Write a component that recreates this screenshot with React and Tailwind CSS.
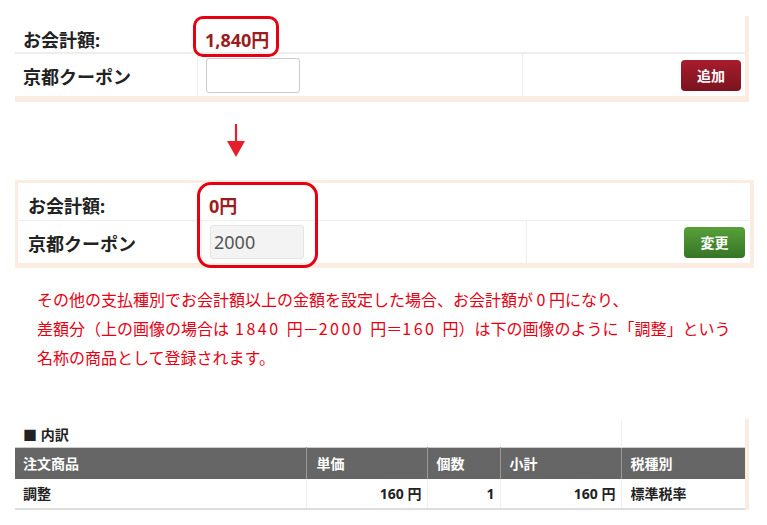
import React from 'react';

const jp = { fontFamily: '"Noto Sans", "Noto Sans CJK JP", sans-serif' };
const cjk = { fontFamily: '"Noto Sans CJK JP", sans-serif' };

function DownArrow() {
    return (
        <svg width="20" height="34" viewBox="0 0 20 34">
            <line x1="10" y1="0" x2="10" y2="24" stroke="#e4202a" strokeWidth="2.2" />
            <polygon points="1,17 19,17 10,33" fill="#e4202a" />
        </svg>
    );
}

export default function App() {
    return (
        <div className="w-[767px] h-[525px] bg-white overflow-hidden text-[#222]" style={jp}>
            {/* Before: coupon panel */}
            <div className="relative ml-[15px] mt-[16px] w-[734px] bg-white border-r-4 border-b-[6px] border-[#fbece2]">
                <div className="grid grid-cols-[182px_325px_1fr] h-[38px] border-b-2 border-[#eeeeee]">
                    <div className="pl-2 pt-[11px] text-[18px] font-bold leading-[26px]">お会計額:</div>
                    <div className="pl-2 pt-[11px] text-[18px] font-bold leading-[26px] text-[#9b1c20]">1,840円</div>
                    <div />
                </div>
                <div className="grid grid-cols-[182px_325px_1fr] h-[42px]">
                    <div className="pl-2 pt-[5px] flex items-center text-[18px] font-bold">京都クーポン</div>
                    <div className="border-l border-[#eeeeee] flex items-center pl-2">
                        <div className="w-[94px] h-[35px] border border-[#cccccc] rounded-[3px] bg-white" />
                    </div>
                    <div className="border-l border-[#eeeeee] flex items-center justify-end pr-[4px]">
                        <button className="w-[60px] h-[31px] rounded-[4px] bg-gradient-to-b from-[#a81d2d] to-[#7a1320] text-white text-[14px] font-bold">追加</button>
                    </div>
                </div>
                <div className="absolute left-[178px] top-0 w-[86px] h-[41px] border-[3px] border-[#e50012] rounded-[10px]" />
            </div>

            {/* Arrow */}
            <div className="h-[78px] pl-[226px] pt-[22px]">
                <DownArrow />
            </div>

            {/* After: coupon panel */}
            <div className="relative ml-[15px] w-[739px] bg-white border-t-[3px] border-l-[3px] border-r-4 border-b-[5px] border-[#fbece2]">
                <div className="grid grid-cols-[183px_325px_1fr] h-[38px] border-b border-[#eeeeee]">
                    <div className="pl-[10px] pt-[10px] text-[18px] font-bold leading-[26px]">お会計額:</div>
                    <div className="pl-2 pt-[10px] text-[18px] font-bold leading-[26px] text-[#9b1c20]">0円</div>
                    <div />
                </div>
                <div className="grid grid-cols-[183px_325px_1fr] h-[42px]">
                    <div className="pl-[10px] pt-[5px] flex items-center text-[18px] font-bold">京都クーポン</div>
                    <div className="border-l border-[#eeeeee] flex items-center pl-2">
                        <div className="w-[94px] h-[34px] border border-[#e4e4e4] rounded-[3px] bg-[#f3f3f3] flex items-center pl-[3px] text-[18px] text-[#555]">2000</div>
                    </div>
                    <div className="border-l border-[#eeeeee] flex items-center justify-end pr-[5px]">
                        <button className="w-[61px] h-[31px] rounded-[4px] bg-gradient-to-b from-[#58a03a] to-[#377527] text-white text-[14px] font-bold">変更</button>
                    </div>
                </div>
                <div className="absolute left-[179px] top-[-1px] w-[121px] h-[86px] border-[3px] border-[#e50012] rounded-[14px]" />
            </div>

            {/* Note */}
            <p className="mt-[17px] pl-[37px] text-[16px] leading-[29px] text-[#e60012] whitespace-nowrap" style={cjk}>
                その他の支払種別でお会計額以上の金額を設定した場合、お会計額が 0 円になり、<br />
                差額分（上の画像の場合は<span className="tracking-[2.5px]"> 1840 </span>円－<span className="tracking-[2.5px]">2000 </span>円＝<span className="tracking-[2.5px]">160 </span>円）は下の画像のように「調整」という<br />
                名称の商品として登録されます。
            </p>

            {/* Breakdown table */}
            <div className="ml-[15px] mt-[47px] w-[734px] border-r-4 border-[#fbece2]">
                <table className="w-full border-collapse text-[14px] font-bold">
                    <colgroup>
                        <col className="w-[291px]" />
                        <col className="w-[121px]" />
                        <col className="w-[73px]" />
                        <col className="w-[121px]" />
                        <col />
                    </colgroup>
                    <tbody>
                        <tr className="h-[28px]">
                            <td colSpan={4} className="pl-2 pt-[3px] text-[14px] align-middle">■ 内訳</td>
                            <td className="border-l border-[#eeeeee]" />
                        </tr>
                        <tr className="h-[32px] bg-[#666666] text-white border-t border-[#cccccc]">
                            <td className="pl-2">注文商品</td>
                            <td className="pl-[10px] border-l border-[#999999]">単価</td>
                            <td className="pl-[9px] border-l border-[#999999]">個数</td>
                            <td className="pl-[9px] border-l border-[#999999]">小計</td>
                            <td className="pl-[9px] border-l border-[#999999]">税種別</td>
                        </tr>
                        <tr className="h-[30px] border-b-2 border-[#dddddd]">
                            <td className="pl-2">調整</td>
                            <td className="pr-[5px] text-right border-l border-[#eeeeee]">160 円</td>
                            <td className="pr-[5px] text-right border-l border-[#eeeeee]">1</td>
                            <td className="pr-[5px] text-right border-l border-[#eeeeee]">160 円</td>
                            <td className="pl-[9px] border-l border-[#eeeeee]">標準税率</td>
                        </tr>
                    </tbody>
                </table>
            </div>
        </div>
    );
}
